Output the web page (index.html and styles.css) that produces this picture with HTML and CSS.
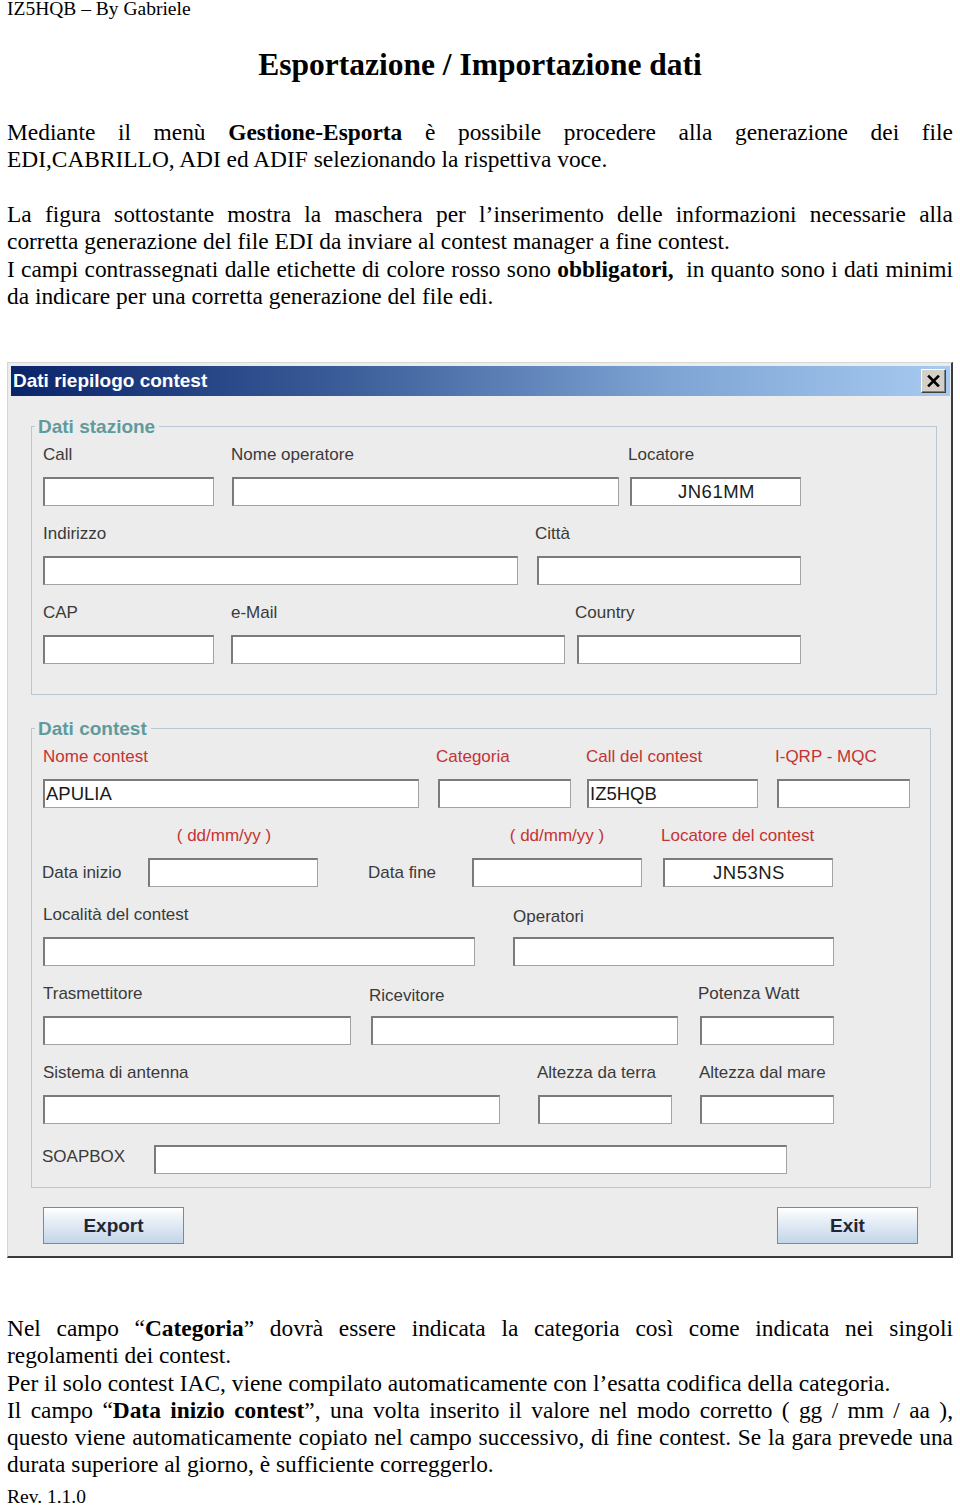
FILE: index.html
```html
<!DOCTYPE html>
<html lang="it">
<head>
<meta charset="utf-8">
<title>Esportazione / Importazione dati</title>
<link rel="stylesheet" href="styles.css">
</head>
<body>
<div class="page">
  <div class="running-head">IZ5HQB – By Gabriele</div>
  <h1 class="doc-title">Esportazione / Importazione dati</h1>

  <div class="para p1">
    <span class="jl">Mediante il menù <b>Gestione-Esporta</b> è possibile procedere alla generazione dei file</span>
    <span class="ll">EDI,CABRILLO, ADI ed ADIF selezionando la rispettiva voce.</span>
  </div>

  <div class="para p2">
    <span class="jl">La figura sottostante mostra la maschera per l’inserimento delle informazioni necessarie alla</span>
    <span class="ll">corretta generazione del file EDI da inviare al contest manager a fine contest.</span>
    <span class="jl">I campi contrassegnati dalle etichette di colore rosso sono <b>obbligatori,</b>&nbsp; in quanto sono i dati minimi</span>
    <span class="ll">da indicare per una corretta generazione del file edi.</span>
  </div>

  <div class="dialog">
    <div class="titlebar">
      <span class="title-text">Dati riepilogo contest</span>
      <span class="close-btn">
        <svg width="23" height="22" viewBox="0 0 23 22"><path d="M7 6.5 L16 15.5 M16 6.5 L7 15.5" stroke="#000" stroke-width="2.6" stroke-linecap="square"/></svg>
      </span>
    </div>

    <div class="group fs1">
      <div class="legend">Dati stazione</div>
      <div class="rows">
        <div class="row">
          <div class="field w171"><div class="lbl">Call</div><div class="inp"></div></div>
          <div class="field w387 ml18"><div class="lbl shl1">Nome operatore</div><div class="inp"></div></div>
          <div class="field w171 ml11"><div class="lbl shl2">Locatore</div><div class="inp center">JN61MM</div></div>
        </div>
        <div class="row">
          <div class="field w475"><div class="lbl">Indirizzo</div><div class="inp"></div></div>
          <div class="field w264 ml19"><div class="lbl shl2">Città</div><div class="inp"></div></div>
        </div>
        <div class="row">
          <div class="field w171"><div class="lbl">CAP</div><div class="inp"></div></div>
          <div class="field w334 ml17"><div class="lbl">e-Mail</div><div class="inp"></div></div>
          <div class="field w224 ml12"><div class="lbl shl2">Country</div><div class="inp"></div></div>
        </div>
      </div>
    </div>

    <div class="group fs2">
      <div class="legend">Dati contest</div>
      <div class="rows">
        <div class="row">
          <div class="field w376"><div class="lbl red">Nome contest</div><div class="inp">APULIA</div></div>
          <div class="field w133 ml19"><div class="lbl red shl2">Categoria</div><div class="inp"></div></div>
          <div class="field w171 ml16"><div class="lbl red shl1">Call del contest</div><div class="inp">IZ5HQB</div></div>
          <div class="field w133 ml19"><div class="lbl red shl2">I-QRP - MQC</div><div class="inp"></div></div>
        </div>
        <div class="row">
          <div class="side w106">Data inizio</div>
          <div class="field w170"><div class="lbl red center off-left">( dd/mm/yy )</div><div class="inp"></div></div>
          <div class="side w104 ml50">Data fine</div>
          <div class="field w170"><div class="lbl red center">( dd/mm/yy )</div><div class="inp"></div></div>
          <div class="field w170 ml21"><div class="lbl red shl2">Locatore del contest</div><div class="inp center">JN53NS</div></div>
        </div>
        <div class="row">
          <div class="field w432"><div class="lbl">Località del contest</div><div class="inp"></div></div>
          <div class="field w321 ml38"><div class="lbl low">Operatori</div><div class="inp"></div></div>
        </div>
        <div class="row">
          <div class="field w308"><div class="lbl">Trasmettitore</div><div class="inp"></div></div>
          <div class="field w307 ml20"><div class="lbl shl2 low">Ricevitore</div><div class="inp"></div></div>
          <div class="field w134 ml22"><div class="lbl shl2">Potenza Watt</div><div class="inp"></div></div>
        </div>
        <div class="row">
          <div class="field w457"><div class="lbl">Sistema di antenna</div><div class="inp"></div></div>
          <div class="field w134 ml38"><div class="lbl shl1">Altezza da terra</div><div class="inp"></div></div>
          <div class="field w134 ml28"><div class="lbl shl1">Altezza dal mare</div><div class="inp"></div></div>
        </div>
        <div class="row soap">
          <div class="side w112 side-up">SOAPBOX</div>
          <div class="inp w633"></div>
        </div>
      </div>
    </div>

    <div class="buttons">
      <span class="btn">Export</span>
      <span class="btn">Exit</span>
    </div>
  </div>

  <div class="para p3">
    <span class="jl">Nel campo “<b>Categoria</b>” dovrà essere indicata la categoria così come indicata nei singoli</span>
    <span class="ll">regolamenti dei contest.</span>
    <span class="ll">Per il solo contest IAC, viene compilato automaticamente con l’esatta codifica della categoria.</span>
    <span class="jl">Il campo “<b>Data inizio contest</b>”, una volta inserito il valore nel modo corretto ( gg / mm / aa ),</span>
    <span class="jl">questo viene automaticamente copiato nel campo successivo, di fine contest. Se la gara prevede una</span>
    <span class="ll">durata superiore al giorno, è sufficiente correggerlo.</span>
  </div>

  <div class="rev">Rev. 1.1.0</div>
</div>
</body>
</html>
```

FILE: styles.css
```css
html, body {
  margin: 0;
  padding: 0;
  background: #ffffff;
}

body {
  font-family: "Liberation Serif", "Times New Roman", serif;
  color: #000000;
}

.page {
  padding: 0 7px;
}

.running-head {
  font-size: 19.5px;
  line-height: 17px;
  height: 17px;
}

.doc-title {
  margin: 30px 0 0 0;
  font-size: 31.5px;
  line-height: 36px;
  height: 36px;
  font-weight: bold;
  text-align: center;
}

.para {
  font-size: 23.4px;
  line-height: 27.25px;
}

.para b {
  font-weight: bold;
}

.p1 {
  margin-top: 36px;
  height: 55px;
}

.p2 {
  margin-top: 27px;
  height: 109px;
}

.p3 {
  margin-top: 57px;
  height: 164px;
}

.jl {
  display: block;
  white-space: nowrap;
  text-align: justify;
  text-align-last: justify;
}

.ll {
  display: block;
  white-space: nowrap;
  text-align: left;
}

.rev {
  margin-top: 7px;
  font-size: 19.5px;
  line-height: 22px;
}

/* ---------- dialog ---------- */

.dialog {
  margin-top: 52px;
  width: 946px;
  box-sizing: border-box;
  background: #ececec;
  border-top: 1px solid #d6d6d6;
  border-left: 1px solid #d6d6d6;
  border-right: 2px solid #3b3b3b;
  border-bottom: 2px solid #3b3b3b;
  padding: 3px 1px 12px 3px;
  font-family: "Liberation Sans", Arial, sans-serif;
}

.titlebar {
  height: 30px;
  display: flex;
  align-items: center;
  justify-content: space-between;
  padding: 0 4px 0 2px;
  background: linear-gradient(to right, #0a246a 0%, #3a5c98 35%, #7ea4d4 70%, #a6caf0 100%);
}

.title-text {
  color: #ffffff;
  font-weight: bold;
  font-size: 19px;
  line-height: 30px;
}

.close-btn {
  width: 25px;
  height: 24px;
  box-sizing: border-box;
  background: #d4d0c8;
  border-top: 1px solid #ffffff;
  border-left: 1px solid #ffffff;
  border-right: 1px solid #404040;
  border-bottom: 1px solid #404040;
  box-shadow: inset -1px -1px 0 #808080;
  display: flex;
  align-items: center;
  justify-content: center;
}

.close-btn svg {
  display: block;
}

.group {
  margin-left: 20px;
  box-sizing: border-box;
  border: 1px solid #bac7d2;
  padding: 0 0 0 11px;
}

.fs1 {
  margin-top: 30px;
  width: 906px;
  padding-bottom: 30px;
}

.fs2 {
  margin-top: 33px;
  width: 900px;
  padding-bottom: 13px;
}

.legend {
  width: fit-content;
  height: 22px;
  margin: -11px 0 0 -8px;
  padding: 0 4px 0 3px;
  background: #ececec;
  color: #5f9b9c;
  font-weight: bold;
  font-size: 19px;
  line-height: 22px;
}

.rows {
  padding-top: 6px;
  display: flex;
  flex-direction: column;
  gap: 17px;
}

.row {
  display: flex;
  align-items: flex-end;
}

.row.soap {
  margin-top: 4px;
}

.field {
  display: flex;
  flex-direction: column;
}

.lbl {
  height: 22px;
  line-height: 22px;
  margin-bottom: 11px;
  font-size: 17px;
  color: #3a3a3a;
  white-space: nowrap;
}

.lbl.red {
  color: #c53333;
}

.lbl.center {
  text-align: center;
}

.lbl.off-left {
  padding-right: 18px;
}

.lbl.low {
  line-height: 26px;
}

.shl1 {
  margin-left: -1px;
}

.shl2 {
  margin-left: -2px;
}

.side {
  height: 29px;
  line-height: 29px;
  font-size: 17px;
  color: #3a3a3a;
  white-space: nowrap;
  margin-left: -1px;
}

.side-up {
  line-height: 23px;
}

.inp {
  height: 29px;
  box-sizing: border-box;
  background: #ffffff;
  border-style: solid;
  border-width: 2px 1px 1px 2px;
  border-color: #7b7b7b #a3a3a3 #a3a3a3 #7b7b7b;
  padding-left: 1px;
  font-size: 18.5px;
  line-height: 26px;
  color: #1a1a1a;
  white-space: nowrap;
}

.inp.center {
  text-align: center;
  letter-spacing: 0.5px;
}

.buttons {
  margin-top: 19px;
  display: flex;
  justify-content: space-between;
  padding: 0 32px;
}

.btn {
  width: 141px;
  height: 37px;
  box-sizing: border-box;
  border: 1px solid #7b8a9b;
  background: linear-gradient(to bottom, #ffffff 0%, #e8eff7 35%, #c3d5e9 100%);
  color: #1e2733;
  font-weight: bold;
  font-size: 19px;
  line-height: 35px;
  text-align: center;
}

/* widths */
.w104 { width: 104px; }
.w106 { width: 106px; }
.w112 { width: 112px; }
.w133 { width: 133px; }
.w134 { width: 134px; }
.w170 { width: 170px; }
.w171 { width: 171px; }
.w224 { width: 224px; }
.w264 { width: 264px; }
.w307 { width: 307px; }
.w308 { width: 308px; }
.w321 { width: 321px; }
.w334 { width: 334px; }
.w376 { width: 376px; }
.w387 { width: 387px; }
.w432 { width: 432px; }
.w457 { width: 457px; }
.w475 { width: 475px; }
.w633 { width: 633px; }

/* gaps */
.ml11 { margin-left: 11px; }
.ml12 { margin-left: 12px; }
.ml16 { margin-left: 16px; }
.ml17 { margin-left: 17px; }
.ml18 { margin-left: 18px; }
.ml19 { margin-left: 19px; }
.ml20 { margin-left: 20px; }
.ml21 { margin-left: 21px; }
.ml22 { margin-left: 22px; }
.ml28 { margin-left: 28px; }
.ml38 { margin-left: 38px; }
.ml50 { margin-left: 50px; }
```
